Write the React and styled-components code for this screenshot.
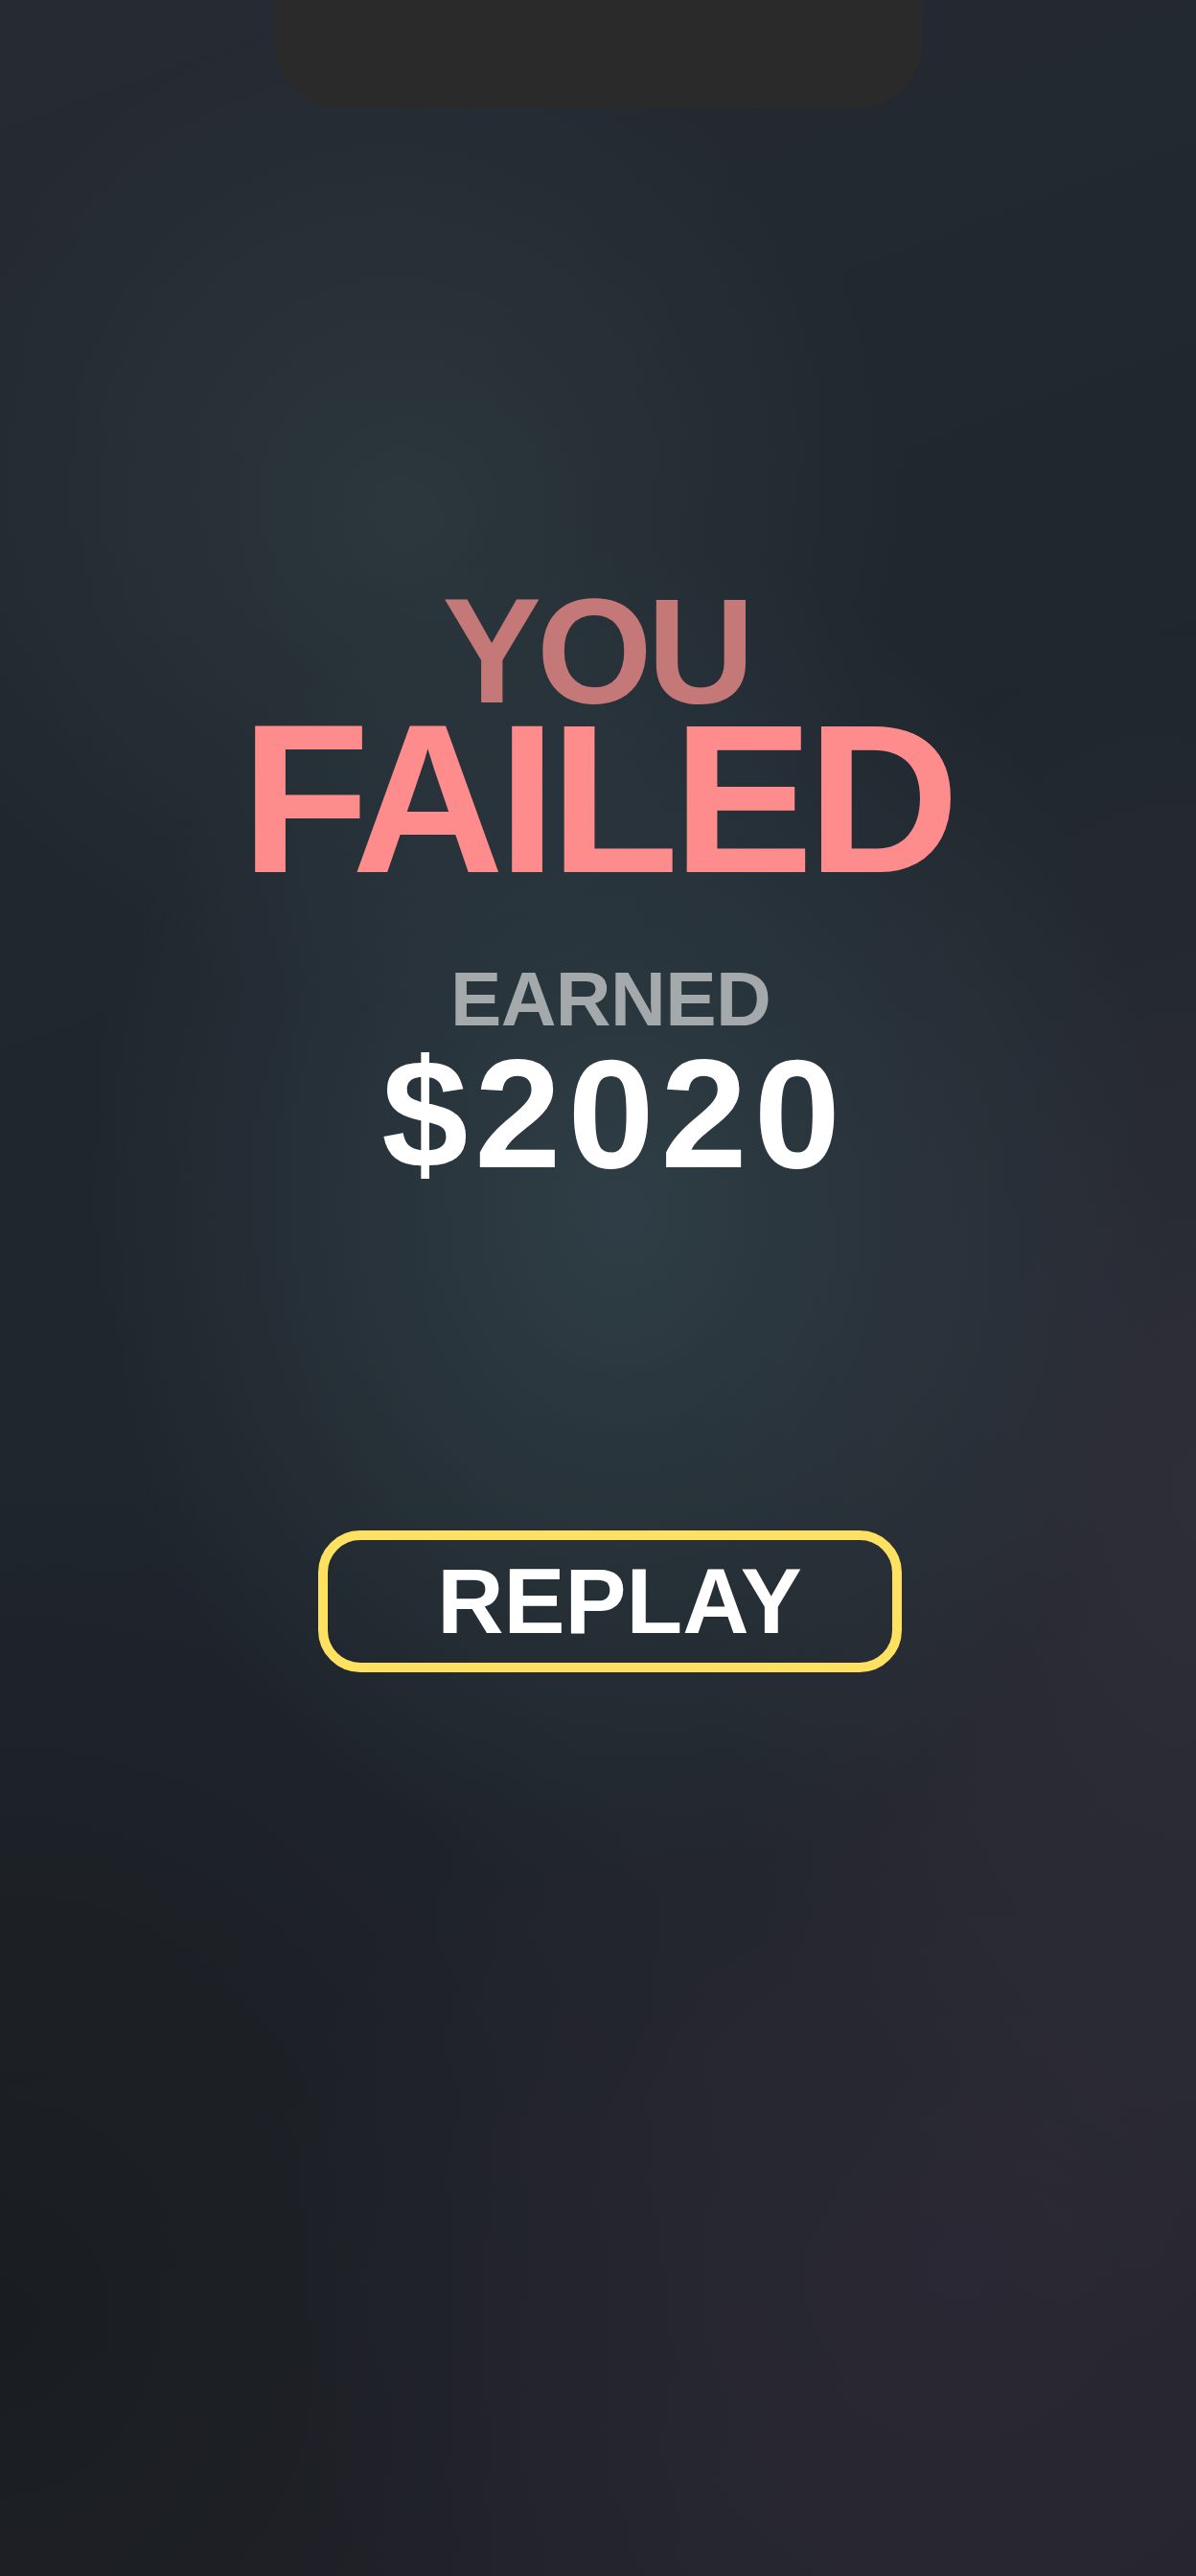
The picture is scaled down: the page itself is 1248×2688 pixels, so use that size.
import React from "react";
import styled, { createGlobalStyle } from "styled-components";

const Global = createGlobalStyle`
  html, body { margin: 0; padding: 0; background: #1e2127; }
  body { font-family: "Liberation Sans", Arial, sans-serif; }
  * { box-sizing: border-box; }
`;

const Screen = styled.div`
  width: 1248px;
  height: 2688px;
  display: flex;
  flex-direction: column;
  align-items: center;
  overflow: hidden;
  background:
    radial-gradient(ellipse 560px 700px at 52% 47%, rgba(52, 70, 78, 0.75), rgba(52, 70, 78, 0) 100%),
    radial-gradient(ellipse 520px 520px at 34% 20%, rgba(50, 64, 70, 0.6), rgba(50, 64, 70, 0) 100%),
    radial-gradient(ellipse 520px 900px at 100% 58%, rgba(52, 50, 62, 0.7), rgba(52, 50, 62, 0) 100%),
    radial-gradient(ellipse 700px 700px at 80% 88%, rgba(46, 42, 56, 0.6), rgba(46, 42, 56, 0) 100%),
    radial-gradient(ellipse 800px 900px at 0% 90%, rgba(24, 27, 30, 0.85), rgba(24, 27, 30, 0) 100%),
    linear-gradient(160deg, #262a33 0%, #20272f 30%, #1f252c 60%, #24242d 100%);
`;

const Notch = styled.div`
  width: 677px;
  height: 113px;
  flex: none;
  background: #2a2a2a;
  border-radius: 0 0 70px 70px;
  margin-left: 1px;
`;

const Title = styled.div`
  font-weight: 700;
  line-height: ${(p) => p.$lh};
  text-align: center;
  font-size: ${(p) => p.$size}px;
  letter-spacing: ${(p) => p.$ls}px;
  color: ${(p) => p.$color};
  margin-top: ${(p) => p.$mt}px;
  margin-left: ${(p) => p.$dx * 2}px;
  white-space: nowrap;
`;

const ReplayButton = styled.button`
  margin-top: 354px;
  margin-left: 25px;
  width: 609px;
  height: 148px;
  border: 10px solid #ffe162;
  border-radius: 44px;
  background: transparent;
  color: #ffffff;
  font-family: "Liberation Sans", Arial, sans-serif;
  font-weight: 700;
  font-size: 96px;
  letter-spacing: 0px;
  line-height: 1;
  display: flex;
  align-items: center;
  justify-content: center;
  padding: 0 0 0 20px;
  cursor: pointer;
`;

export default function App() {
  return (
    <>
      <Global />
      <Screen>
        <Notch />
        <Title $size={155} $lh={0.78} $ls={-5} $dx={-2} $color="#c47878" $mt={507}>
          YOU
        </Title>
        <Title $size={220} $lh={0.78} $ls={-6.5} $dx={-1} $color="#ff8c8c" $mt={8}>
          FAILED
        </Title>
        <Title $size={80} $lh={0.78} $ls={-0.6} $dx={13} $color="#a4a9ac" $mt={92}>
          EARNED
        </Title>
        <Title $size={162} $lh={1} $ls={7} $dx={17} $color="#ffffff" $mt={6}>
          $2020
        </Title>
        <ReplayButton>REPLAY</ReplayButton>
      </Screen>
    </>
  );
}
